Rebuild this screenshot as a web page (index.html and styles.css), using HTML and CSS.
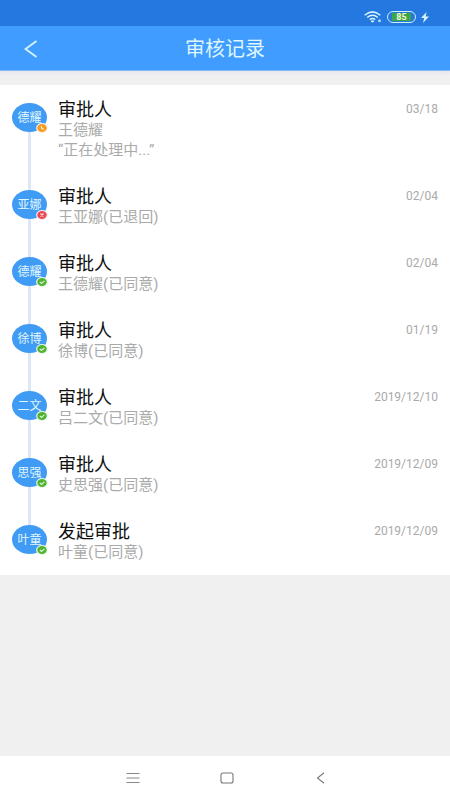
FILE: index.html
```html
<!DOCTYPE html>
<html lang="zh-CN">
<head>
<meta charset="utf-8">
<meta name="viewport" content="width=device-width, initial-scale=1">
<title>审核记录</title>
<link rel="stylesheet" href="styles.css">
</head>
<body>
<svg class="defs" aria-hidden="true">
  <symbol id="ok" viewBox="0 0 12 10"><ellipse cx="6" cy="5" rx="5.9" ry="4.9" fill="#e6f6e4"/><ellipse cx="6" cy="5" rx="4.7" ry="4" fill="#50b331"/><path d="M3.8 4.8 5.5 6.4 8.4 3.8" fill="none" stroke="#e6f8d8" stroke-width="1.1"/></symbol>
  <symbol id="no" viewBox="0 0 12 10"><ellipse cx="6" cy="5" rx="5.9" ry="4.9" fill="#fbe9ee"/><ellipse cx="6" cy="5" rx="4.7" ry="4" fill="#e84a55"/><path d="M4.500 3.500 7.500 6.500M7.500 3.500 4.500 6.500" fill="none" stroke="#ffdadd" stroke-width="1.1"/></symbol>
  <symbol id="wait" viewBox="0 0 12 10"><ellipse cx="6" cy="5" rx="5.9" ry="4.9" fill="#fdf1e2"/><ellipse cx="6" cy="5" rx="4.7" ry="4" fill="#f59a23"/><path d="M5.6 2.8V5.2L7.8 6.4" fill="none" stroke="#fff0d0" stroke-width="1.1"/></symbol>
</svg>
<div class="status">
  <svg width="18" height="12" viewBox="0 0 18 12" aria-label="Wi-Fi"><g fill="none" stroke="#d5f3fb" stroke-width="1.5"><path d="M.7 4.2Q8.5-2.4 16.3 4.2"/><path d="M3.2 6.5Q8.5 2 13.8 6.5"/><path d="M5.8 8.6Q8.5 6.4 11.2 8.6"/></g><ellipse cx="8.5" cy="10.3" rx="1.6" ry="1.1" fill="#d5f3fb"/><circle cx="15.5" cy="9.8" r="1.5" fill="#a9d6f5"/></svg>
  <span class="battery"><span class="charge">85</span></span>
  <svg width="8" height="11" viewBox="0 0 8 11" aria-label="充电中"><path d="M5.5 0 0 6h3.2L2 11l6-6.4H4.7z" fill="#d5f3fb"/></svg>
</div>
<header class="bar">
  <button class="back" type="button" aria-label="返回"><svg width="14" height="18" viewBox="0 0 14 18"><path d="M12.5 1 1.5 9l11 8" fill="none" stroke="#d8f5fd" stroke-width="1.8"/></svg></button>
  <h1>审核记录</h1>
</header>
<main>
  <ol class="records">
    <li><div class="avatar">德耀<svg class="badge"><use href="#wait"/></svg></div><div class="info"><h2>审批人</h2><p>王德耀</p><p class="note">“正在处理中...”</p></div><time>03/18</time></li>
    <li><div class="avatar">亚娜<svg class="badge"><use href="#no"/></svg></div><div class="info"><h2>审批人</h2><p>王亚娜(已退回)</p></div><time>02/04</time></li>
    <li><div class="avatar">德耀<svg class="badge"><use href="#ok"/></svg></div><div class="info"><h2>审批人</h2><p>王德耀(已同意)</p></div><time>02/04</time></li>
    <li><div class="avatar">徐博<svg class="badge"><use href="#ok"/></svg></div><div class="info"><h2>审批人</h2><p>徐博(已同意)</p></div><time>01/19</time></li>
    <li><div class="avatar">二文<svg class="badge"><use href="#ok"/></svg></div><div class="info"><h2>审批人</h2><p>吕二文(已同意)</p></div><time>2019/12/10</time></li>
    <li><div class="avatar">思强<svg class="badge"><use href="#ok"/></svg></div><div class="info"><h2>审批人</h2><p>史思强(已同意)</p></div><time>2019/12/09</time></li>
    <li><div class="avatar">叶童<svg class="badge"><use href="#ok"/></svg></div><div class="info"><h2>发起审批</h2><p>叶童(已同意)</p></div><time>2019/12/09</time></li>
  </ol>
</main>
<nav class="system">
  <button type="button" aria-label="菜单"><svg width="14" height="12" viewBox="0 0 14 12"><path d="M.5 1.5h13M.5 6h13M.5 10.5h13" stroke="#888" fill="none"/></svg></button>
  <button type="button" aria-label="主屏幕"><svg width="14" height="12" viewBox="0 0 14 12"><rect x="1" y="1" width="12" height="10" rx="2" stroke="#777" stroke-width="1.1" fill="none"/></svg></button>
  <button type="button" aria-label="后退"><svg width="14" height="12" viewBox="0 0 14 12"><path d="M10 .8 3.500 6l6.500 5.200" stroke="#777" stroke-width="1.1" fill="none"/></svg></button>
</nav>
</body>
</html>
```
FILE: styles.css
```css
* { box-sizing: border-box; }
body {
  margin: 0;
  min-height: 100vh;
  display: flex;
  flex-direction: column;
  background: #f0f0f0;
  font-family: Roboto, "Noto Sans CJK SC", sans-serif;
}
h1, h2, p, ol { margin: 0; padding: 0; font-weight: 400; }
button { border: 0; padding: 0; background: none; display: grid; place-items: center; }
svg { display: block; }
.defs { position: absolute; width: 0; height: 0; }

.status {
  position: relative;
  z-index: 1;
  height: 26px;
  padding: 8px 21px 0 0;
  display: flex;
  align-items: center;
  justify-content: flex-end;
  gap: 5px;
  background: #2478df;
}
.battery {
  width: 29px;
  height: 12px;
  padding: 1px 4px;
  border: 1px solid #c9f0f2;
  border-radius: 6px;
}
.charge {
  display: block;
  background: #3fa648;
  color: #effbd8;
  font-size: 9px;
  font-weight: 700;
  line-height: 8px;
  text-align: center;
}

.bar {
  height: 45px;
  padding-top: 1px;
  display: grid;
  grid-template-columns: 62px 1fr 62px;
  align-items: center;
  background: #409cff;
  border-bottom: 1px solid #86b8f2;
  box-shadow: 0 1px 4px #dcdff2;
}
.back { height: 43px; }
.bar h1 { color: #def6fc; font-size: 20px; line-height: 28px; text-align: center; }

main { flex: 1; padding-top: 14px; }
.records {
  list-style: none;
  background: #fff;
  padding: 14px 12px 13px;
}
.records li {
  position: relative;
  display: flex;
  align-items: flex-start;
  padding-bottom: 26px;
}
.records li:last-child { padding-bottom: 0; }
.records li:not(:last-child)::before {
  content: "";
  position: absolute;
  left: 16px;
  top: 20px;
  bottom: -20px;
  width: 3px;
  background: #dce8f8;
}
.avatar {
  position: relative;
  width: 35px;
  height: 29px;
  margin: 4px 11px 0 0;
  border-radius: 50%;
  background: #409bf4;
  color: #e0f7fc;
  font-size: 12px;
  line-height: 31px;
  text-align: center;
  z-index: 1;
}
.badge { position: absolute; right: -1px; bottom: -1px; width: 12px; height: 10px; }
.info { flex: 1; }
.info h2 { color: #111; font-size: 18px; line-height: 22px; }
.info p { color: #aaa; font-size: 15px; line-height: 19px; }
.info .note { line-height: 20px; }
time { color: #aaa; font-size: 12px; line-height: 20px; }

.system {
  height: 44px;
  padding: 0 82px 0 86px;
  display: flex;
  align-items: center;
  justify-content: space-around;
  background: #fff;
}
.system button { width: 44px; height: 44px; }
```
